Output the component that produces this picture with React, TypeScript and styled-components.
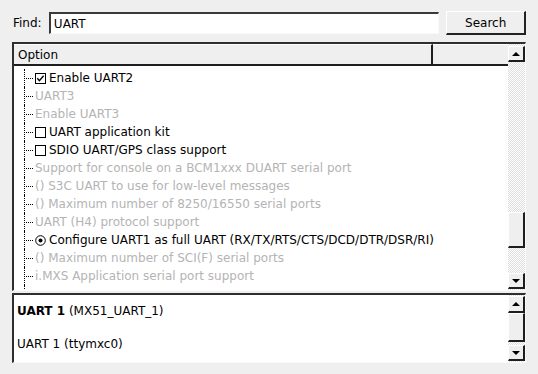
import React from "react";
import styled, { createGlobalStyle } from "styled-components";

const Global = createGlobalStyle`
  html, body { margin: 0; padding: 0; background: #efefef; }
  body { font-family: "DejaVu Sans", "Liberation Sans", sans-serif; font-size: 12px; color: #000; }
  * { box-sizing: border-box; }
`;

const Page = styled.div`
  width: 538px;
  height: 374px;
  padding: 11px 12px 0 12px;
  display: flex;
  flex-direction: column;
`;

const TopBar = styled.div`
  display: flex;
  align-items: center;
  height: 24px;
`;

const FindLabel = styled.label`
  margin-left: 1px;
  width: 36px;
`;

const FindInput = styled.div`
  width: 392px;
  height: 22px;
  background: #fff;
  border-style: solid;
  border-width: 2px 1px 1px 2px;
  border-color: #3a3a3a #fafafa #fafafa #3a3a3a;
  padding-left: 3px;
  display: flex;
  align-items: center;
`;

const SearchButton = styled.div`
  margin-left: 7px;
  width: 80px;
  height: 24px;
  background: #efefef;
  border-style: solid;
  border-width: 1px 2px 2px 1px;
  border-color: #fff #222 #222 #fff;
  display: flex;
  align-items: center;
  justify-content: center;
`;

const Panel = styled.div<{ $h: number; $mt: number }>`
  margin-top: ${(p) => p.$mt}px;
  height: ${(p) => p.$h}px;
  width: 514px;
  border-style: solid;
  border-width: 2px 1px 1px 2px;
  border-color: #2e2e2e #fafafa #fafafa #2e2e2e;
  display: flex;
  background: #fff;
`;

const Main = styled.div`
  flex: 1;
  display: flex;
  flex-direction: column;
  overflow: hidden;
`;

const Header = styled.div`
  height: 22px;
  display: flex;
  background: #efefef;
  border-bottom: 2px solid #1e1e1e;
  flex-shrink: 0;
`;

const HeaderSection = styled.div<{ $w?: number }>`
  ${(p) => (p.$w ? `width: ${p.$w}px;` : "flex: 1;")}
  padding-left: 4px;
  display: flex;
  align-items: center;
  border-right: ${(p) => (p.$w ? "2px solid #1e1e1e" : "none")};
  border-top: 1px solid #fff;
`;

const List = styled.div`
  flex: 1;
  padding-top: 3px;
  background: #fff;
`;

const Row = styled.div`
  height: 18px;
  display: flex;
  align-items: center;
  white-space: nowrap;
`;

const Branch = styled.div`
  width: 19px;
  height: 18px;
  margin-left: 10px;
  position: relative;
  border-left: 1px dotted #000;
  &::after {
    content: "";
    position: absolute;
    left: 1px;
    top: 9px;
    width: 7px;
    border-top: 1px dotted #000;
  }
`;

const Indicator = styled.svg`
  width: 11px;
  height: 11px;
  margin-left: -8px;
  margin-right: 3px;
  flex-shrink: 0;
`;

const Label = styled.span<{ $disabled?: boolean }>`
  color: ${(p) => (p.$disabled ? "#b4b4b4" : "#000")};
  margin-left: ${(p) => (p.$disabled ? "-8px" : "0")};
`;

const ScrollBar = styled.div`
  width: 17px;
  display: flex;
  flex-direction: column;
  background: repeating-conic-gradient(#dedede 0% 25%, #ffffff 0% 50%) 0 0 / 2px 2px;
`;

const ScrollButton = styled.div<{ $h: number; $mt?: number }>`
  height: ${(p) => p.$h}px;
  margin-top: ${(p) => p.$mt ?? 0}px;
  background: #efefef;
  border-style: solid;
  border-width: 1px 2px 2px 1px;
  border-color: #fff #1e1e1e #1e1e1e #fff;
  display: flex;
  align-items: center;
  justify-content: center;
  flex-shrink: 0;
`;

const Arrow = styled.div<{ $dir: "up" | "down" }>`
  width: 0;
  height: 0;
  border-left: 4px solid transparent;
  border-right: 4px solid transparent;
  ${(p) =>
    p.$dir === "up"
      ? "border-bottom: 4px solid #000;"
      : "border-top: 4px solid #000;"}
`;

const Spacer = styled.div<{ $h?: number }>`
  ${(p) => (p.$h ? `height: ${p.$h}px;` : "flex: 1;")}
  flex-shrink: 0;
`;

const Info = styled.div`
  flex: 1;
  padding: 8px 0 0 3px;
  background: #fff;
`;

const InfoLine = styled.p<{ $gap?: number }>`
  margin: 0 0 ${(p) => p.$gap ?? 0}px 0;
  line-height: 17px;
`;

const Bold = styled.b`
  font-weight: bold;
`;

type Item = { kind: "check" | "checked" | "radio" | "none"; text: string; disabled?: boolean };

const items: Item[] = [
  { kind: "checked", text: "Enable UART2" },
  { kind: "none", text: "UART3", disabled: true },
  { kind: "none", text: "Enable UART3", disabled: true },
  { kind: "check", text: "UART application kit" },
  { kind: "check", text: "SDIO UART/GPS class support" },
  { kind: "none", text: "Support for console on a BCM1xxx DUART serial port", disabled: true },
  { kind: "none", text: "() S3C UART to use for low-level messages", disabled: true },
  { kind: "none", text: "() Maximum number of 8250/16550 serial ports", disabled: true },
  { kind: "none", text: "UART (H4) protocol support", disabled: true },
  { kind: "radio", text: "Configure UART1 as full UART (RX/TX/RTS/CTS/DCD/DTR/DSR/RI)" },
  { kind: "none", text: "() Maximum number of SCI(F) serial ports", disabled: true },
  { kind: "none", text: "i.MXS Application serial port support", disabled: true },
  { kind: "none", text: "", disabled: true },
];

function Ind({ kind }: { kind: Item["kind"] }) {
  if (kind === "none") return null;
  if (kind === "radio")
    return (
      <Indicator viewBox="0 0 11 11">
        <circle cx="5.5" cy="5.5" r="4.8" fill="#fff" stroke="#000" strokeWidth="1" />
        <circle cx="5.5" cy="5.5" r="2" fill="#000" />
      </Indicator>
    );
  return (
    <Indicator viewBox="0 0 11 11">
      <rect x="0.5" y="0.5" width="10" height="10" fill="#fff" stroke="#000" strokeWidth="1" />
      {kind === "checked" && (
        <path d="M2.3 5.2 L4.4 7.6 L8.6 2.8" fill="none" stroke="#000" strokeWidth="1.4" />
      )}
    </Indicator>
  );
}

export default function App() {
  return (
    <>
      <Global />
      <Page>
        <TopBar>
          <FindLabel>Find:</FindLabel>
          <FindInput>UART</FindInput>
          <SearchButton>Search</SearchButton>
        </TopBar>
        <Panel $h={249} $mt={7}>
          <Main>
            <Header>
              <HeaderSection $w={419}>Option</HeaderSection>
              <HeaderSection />
            </Header>
            <List>
              {items.map((it, i) => (
                <Row key={i}>
                  <Branch />
                  <Ind kind={it.kind} />
                  <Label $disabled={it.disabled}>{it.text}</Label>
                </Row>
              ))}
            </List>
          </Main>
          <ScrollBar>
            <ScrollButton $h={16} $mt={2}>
              <Arrow $dir="up" />
            </ScrollButton>
            <Spacer $h={150} />
            <ScrollButton $h={36}>{null}</ScrollButton>
            <Spacer />
            <ScrollButton $h={16}>
              <Arrow $dir="down" />
            </ScrollButton>
            <Spacer $h={1} />
          </ScrollBar>
        </Panel>
        <Panel $h={70} $mt={2}>
          <Info>
            <InfoLine $gap={16}>
              <Bold>UART 1</Bold> (MX51_UART_1)
            </InfoLine>
            <InfoLine>UART 1 (ttymxc0)</InfoLine>
          </Info>
          <ScrollBar>
            <ScrollButton $h={17} $mt={1}>
              <Arrow $dir="up" />
            </ScrollButton>
            <ScrollButton $h={29}>{null}</ScrollButton>
            <Spacer />
            <ScrollButton $h={16}>
              <Arrow $dir="down" />
            </ScrollButton>
            <Spacer $h={1} />
          </ScrollBar>
        </Panel>
      </Page>
    </>
  );
}
